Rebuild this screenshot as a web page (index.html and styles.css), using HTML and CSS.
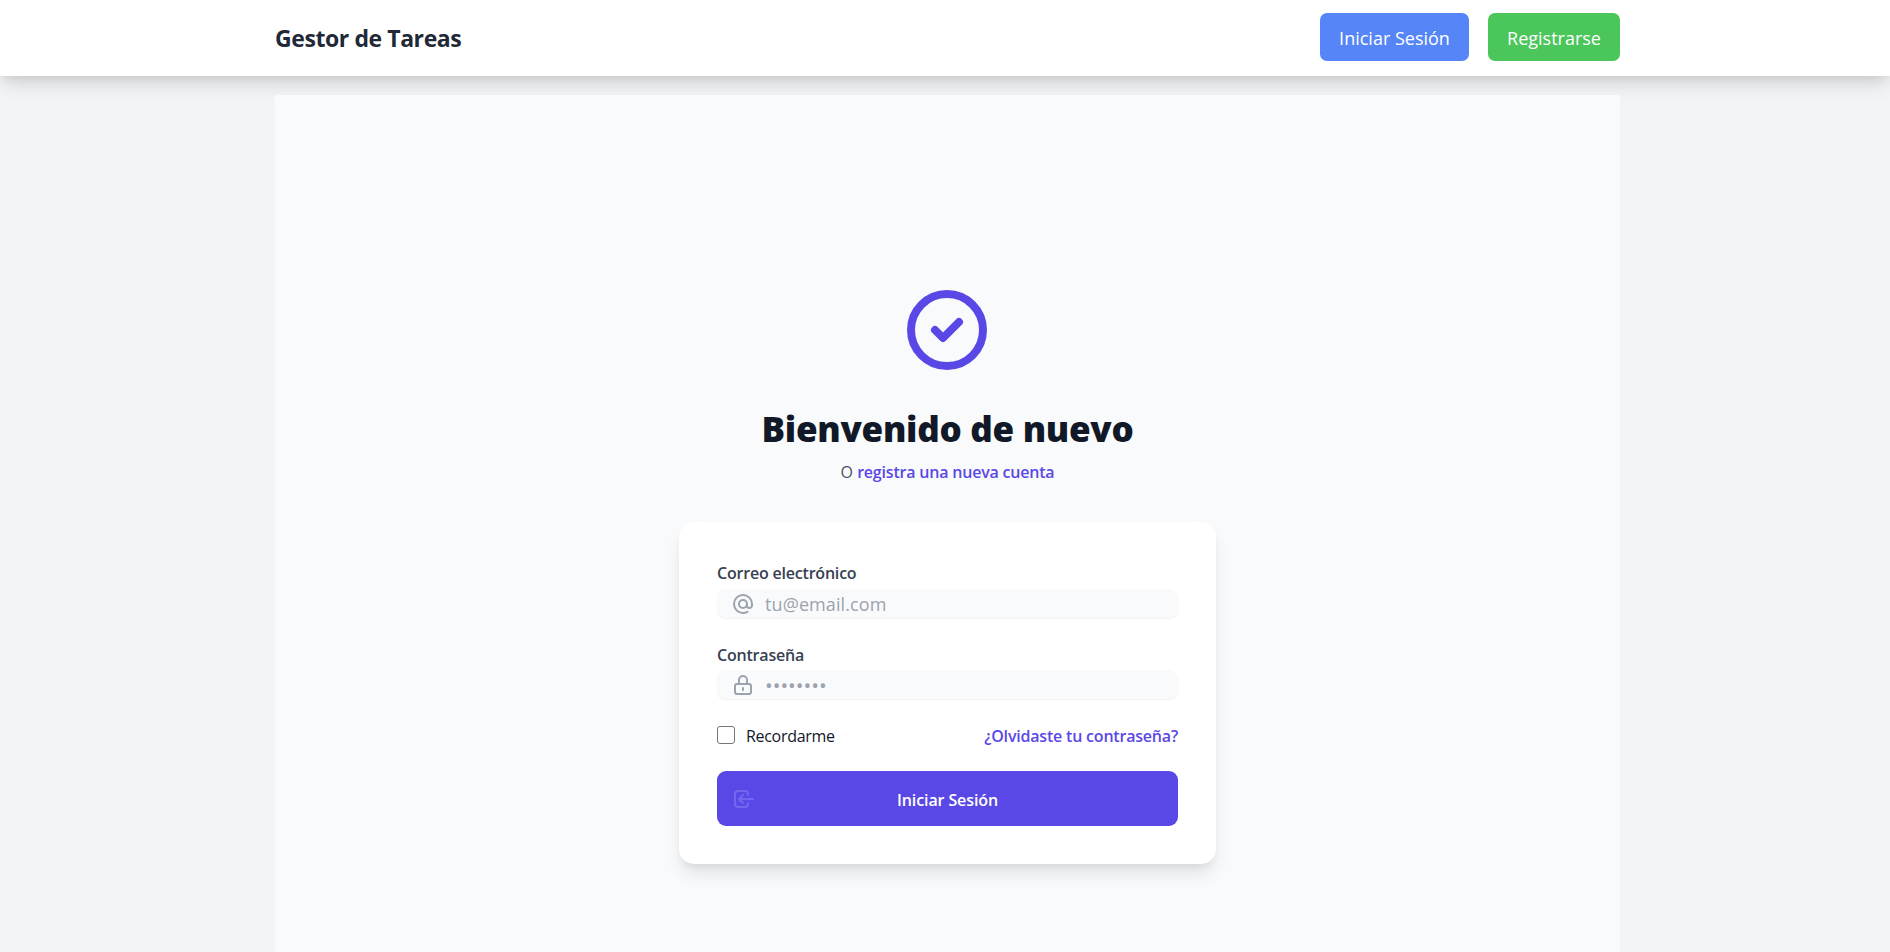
FILE: index.html
```html
<!DOCTYPE html>
<html lang="es">
<head>
<meta charset="utf-8">
<title>Gestor de Tareas</title>
<link rel="stylesheet" href="styles.css">
</head>
<body>
<header class="topbar">
  <div class="brand">Gestor de Tareas</div>
  <nav class="actions">
    <a class="btn btn-login">Iniciar Sesión</a>
    <a class="btn btn-register">Registrarse</a>
  </nav>
</header>
<main class="panel">
  <svg class="hero-icon" viewBox="0 0 24 24"><path d="M9 12l2 2 4-4m6 2a9 9 0 11-18 0 9 9 0 0118 0z"/></svg>
  <h1 class="title">Bienvenido de nuevo</h1>
  <p class="subtitle"><span class="or">O</span> <a class="link">registra una nueva cuenta</a></p>
  <form class="card">
    <label class="label label-email">Correo electrónico</label>
    <div class="field">
      <svg class="icon" viewBox="0 0 24 24"><path d="M16 12a4 4 0 10-8 0 4 4 0 008 0zm0 0v1.500a2.500 2.500 0 005 0V12a9 9 0 10-9 9m4.500-1.206a8.959 8.959 0 01-4.500 1.207"/></svg>
      <span class="placeholder">tu@email.com</span>
    </div>
    <label class="label label-pass">Contraseña</label>
    <div class="field">
      <svg class="icon" viewBox="0 0 24 24"><path d="M12 15v2m-6 4h12a2 2 0 002-2v-6a2 2 0 00-2-2H6a2 2 0 00-2 2v6a2 2 0 002 2zm10-10V7a4 4 0 00-8 0v4h8z"/></svg>
      <span class="dots">••••••••</span>
    </div>
    <div class="options">
      <span class="check"></span>
      <span class="remember">Recordarme</span>
      <a class="link forgot">¿Olvidaste tu contraseña?</a>
    </div>
    <div class="submit">
      <svg class="icon submit-icon" viewBox="0 0 24 24"><path d="M11 16l-4-4m0 0l4-4m-4 4h14m-5 4v1a3 3 0 01-3 3H6a3 3 0 01-3-3V7a3 3 0 013-3h7a3 3 0 013 3v1"/></svg>
      <span class="submit-text">Iniciar Sesión</span>
    </div>
  </form>
</main>
</body>
</html>
```
FILE: styles.css
```css
* { box-sizing: border-box; }
body { margin: 0; height: 952px; overflow: hidden; background: #f3f4f6; font-family: "Open Sans", "Noto Sans", sans-serif; color: #111827; }
.topbar { height: 76px; padding: 13px 270px 0 275px; display: flex; justify-content: space-between; background: #fff; box-shadow: 0 12px 18px -3px rgba(0,0,0,.1), 0 5px 7px -2px rgba(0,0,0,.05), 0 0 20px rgba(0,0,0,.06); }
.brand { font-size: 23px; line-height: 50px; font-weight: 700; letter-spacing: -0.42px; color: #1f2937; white-space: nowrap; }
.actions { display: flex; gap: 19px; }
.btn { height: 48px; border-radius: 7px; color: #fff; font-size: 18px; line-height: 50px; text-align: center; white-space: nowrap; }
.btn-login { width: 149px; background: #5585f7; }
.btn-register { width: 132px; background: #4bc65b; }
.panel { width: 1345px; height: 857px; margin: 19px 0 0 275px; padding-top: 187px; background: #f9fafb; display: flex; flex-direction: column; align-items: center; }
.hero-icon { width: 96px; height: 96px; margin-right: 1px; fill: none; stroke: #5a48e6; stroke-width: 2; stroke-linecap: round; stroke-linejoin: round; }
.title { margin: 29px 0 0; font-size: 35px; line-height: 43px; font-weight: 800; letter-spacing: -0.28px; white-space: nowrap; }
.subtitle { margin: 10px 0 0; font-size: 16px; line-height: 24px; color: #4b5563; white-space: nowrap; }
.link { color: #5a48e6; font-weight: 600; letter-spacing: -0.2px; }
.card { width: 537px; height: 342px; margin-top: 38px; padding: 38px 38px 0; border-radius: 15px; background: #fff; box-shadow: 0 12px 18px -3px rgba(0,0,0,.1), 0 5px 7px -2px rgba(0,0,0,.05); }
.label { display: block; height: 29px; font-size: 16px; line-height: 26px; font-weight: 600; letter-spacing: -0.2px; color: #374151; }
.label-pass { height: 52px; padding-top: 24px; }
.field { height: 29px; padding-left: 14px; display: flex; align-items: center; gap: 10px; border-radius: 9px; background: #f9fafb; box-shadow: 0 1px 2px rgba(0,0,0,.06); }
.icon { width: 24px; height: 24px; fill: none; stroke: #9ca3af; stroke-width: 2; stroke-linecap: round; stroke-linejoin: round; }
.placeholder, .dots { color: #9ca3af; font-size: 18px; line-height: 29px; }
.placeholder { padding-top: 1px; letter-spacing: 0.1px; }
.dots { padding-top: 2px; font-size: 20.5px; }
.options { height: 72px; padding-top: 27px; display: flex; align-items: flex-start; }
.check { width: 18px; height: 18px; border: 1px solid #767676; border-radius: 3px; background: #fff; }
.remember { margin-left: 11px; font-size: 16px; line-height: 20px; letter-spacing: -0.3px; }
.forgot { margin-left: auto; font-size: 16px; line-height: 20px; }
.submit { position: relative; height: 55px; display: flex; justify-content: center; border-radius: 9px; background: #5a48e6; }
.submit-icon { position: absolute; left: 15px; top: 16px; stroke: #7168f0; }
.submit-text { color: #fff; font-size: 16px; line-height: 58px; font-weight: 600; letter-spacing: -0.1px; }
```
